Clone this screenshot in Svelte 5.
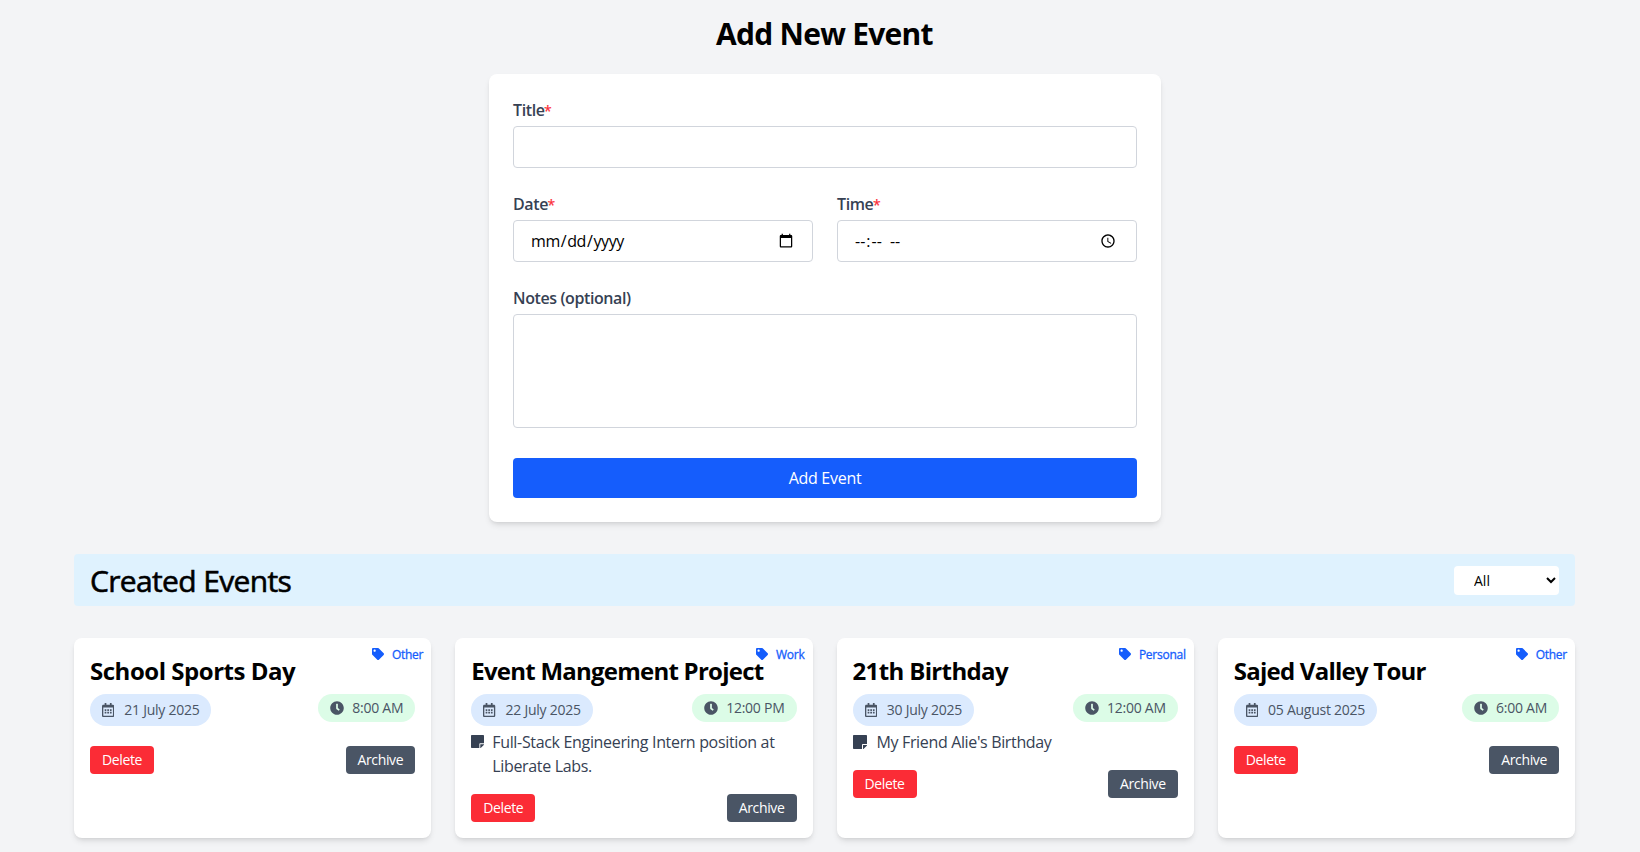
<script>
  const events = [
    { title: 'School Sports Day', date: '21 July 2025', time: '8:00 AM', tag: 'Other', note: '' },
    {
      title: 'Event Mangement Project',
      date: '22 July 2025',
      time: '12:00 PM',
      tag: 'Work',
      note: 'Full-Stack Engineering Intern position at Liberate Labs.',
    },
    { title: '21th Birthday', date: '30 July 2025', time: '12:00 AM', tag: 'Personal', note: "My Friend Alie's Birthday" },
    { title: 'Sajed Valley Tour', date: '05 August 2025', time: '6:00 AM', tag: 'Other', note: '' },
  ];
  const categories = ['All', 'Work', 'Personal', 'Other'];
  let filter = $state('All');
  const shown = $derived(filter === 'All' ? events : events.filter((e) => e.tag === filter));
</script>

<main>
  <h1>Add New Event</h1>

  <form class="panel" onsubmit={(e) => e.preventDefault()}>
    <div class="field">
      <label for="title">Title<span>*</span></label>
      <input id="title" type="text" />
    </div>
    <div class="pair">
      <div class="field">
        <label for="date">Date<span>*</span></label>
        <input id="date" type="date" />
      </div>
      <div class="field">
        <label for="time">Time<span>*</span></label>
        <input id="time" class="clock" type="time" />
      </div>
    </div>
    <div class="field">
      <label for="notes">Notes (optional)</label>
      <textarea id="notes"></textarea>
    </div>
    <button class="submit" type="submit">Add Event</button>
  </form>

  <section class="bar">
    <h2>Created Events</h2>
    <select bind:value={filter}>
      {#each categories as c}<option value={c}>{c}</option>{/each}
    </select>
  </section>

  <section class="grid">
    {#each shown as ev}
      <article class="card">
        <div class="tag">
          <svg width="12" height="12" viewBox="0 0 512 512"><path d="M0 252.118V48C0 21.49 21.49 0 48 0h204.118a48 48 0 0 1 33.941 14.059l211.882 211.882c18.745 18.745 18.745 49.137 0 67.882L293.823 497.941c-18.745 18.745-49.137 18.745-67.882 0L14.059 286.059A48 48 0 0 1 0 252.118zM112 64c-26.51 0-48 21.49-48 48s21.49 48 48 48 48-21.49 48-48-21.49-48-48-48z" /></svg>
          <span>{ev.tag}</span>
        </div>
        <h3 class:tight={ev.title.length > 20 || ev.title.startsWith('Sajed')} class:loose={ev.title.startsWith('School')}>{ev.title}</h3>
        <div class="when">
          <p class="pill date">
            <svg width="12.25" height="14" viewBox="0 0 448 512"><path d="M148 288h-40c-6.6 0-12-5.4-12-12v-40c0-6.6 5.4-12 12-12h40c6.6 0 12 5.4 12 12v40c0 6.6-5.4 12-12 12zm108-12v-40c0-6.6-5.4-12-12-12h-40c-6.6 0-12 5.4-12 12v40c0 6.6 5.4 12 12 12h40c6.6 0 12-5.4 12-12zm96 0v-40c0-6.6-5.4-12-12-12h-40c-6.6 0-12 5.4-12 12v40c0 6.6 5.4 12 12 12h40c6.6 0 12-5.4 12-12zm-96 96v-40c0-6.6-5.4-12-12-12h-40c-6.6 0-12 5.4-12 12v40c0 6.6 5.4 12 12 12h40c6.6 0 12-5.4 12-12zm-96 0v-40c0-6.6-5.4-12-12-12h-40c-6.6 0-12 5.4-12 12v40c0 6.6 5.4 12 12 12h40c6.6 0 12-5.4 12-12zm192 0v-40c0-6.6-5.4-12-12-12h-40c-6.6 0-12 5.4-12 12v40c0 6.6 5.4 12 12 12h40c6.6 0 12-5.4 12-12zm96-260v352c0 26.5-21.5 48-48 48H48c-26.5 0-48-21.5-48-48V112c0-26.5 21.5-48 48-48h48V12c0-6.6 5.4-12 12-12h40c6.6 0 12 5.4 12 12v52h128V12c0-6.6 5.4-12 12-12h40c6.6 0 12 5.4 12 12v52h48c26.5 0 48 21.5 48 48zm-48 346V160H48v298c0 3.3 2.7 6 6 6h340c3.3 0 6-2.7 6-6z" /></svg>
            <span>{ev.date}</span>
          </p>
          <p class="pill time">
            <svg width="14" height="14" viewBox="0 0 512 512"><path d="M256,8C119,8,8,119,8,256S119,504,256,504,504,393,504,256,393,8,256,8Zm92.49,313h0l-20,25a16,16,0,0,1-22.49,2.5h0l-67-49.72a40,40,0,0,1-15-31.23V112a16,16,0,0,1,16-16h32a16,16,0,0,1,16,16V256l58,42.5A16,16,0,0,1,348.49,321Z" /></svg>
            <span>{ev.time}</span>
          </p>
        </div>
        {#if ev.note}
          <div class="note" class:long={ev.note.length > 40}>
            <svg width="14" height="16" viewBox="0 0 448 512"><path d="M312 320h136V56c0-13.3-10.7-24-24-24H24C10.7 32 0 42.7 0 56v400c0 13.3 10.7 24 24 24h264V344c0-13.2 10.8-24 24-24zm129 55l-98 98c-4.5 4.5-10.6 7-17 7h-6V352h128v6.1c0 6.3-2.5 12.4-7 16.9z" /></svg>
            <p>{ev.note}</p>
          </div>
        {/if}
        <div class="actions">
          <button class="delete">Delete</button>
          <button class="archive">Archive</button>
        </div>
      </article>
    {/each}
  </section>
</main>

<style>
  :global(body) {
    background: #f3f4f6;
    overflow: hidden;
  }
  :global(*) {
    box-sizing: border-box;
  }
  main {
    width: 1501px;
    height: 852px;
    margin-left: 74px;
    padding-top: 16px;
    color: #000;
    font: 16px/24px 'Segoe UI', 'Open Sans', 'Noto Sans', sans-serif;
  }
  h1, h2, h3, p {
    margin: 0;
  }
  h1 {
    margin-bottom: 22px;
    font-size: 30px;
    line-height: 36px;
    font-weight: 700;
    letter-spacing: -0.74px;
    text-align: center;
  }
  .panel {
    display: flex;
    flex-direction: column;
    gap: 24px;
    width: 672px;
    height: 448px;
    margin: 0 auto 32px 415px;
    padding: 24px;
    border-radius: 8px;
    background: #fff;
    box-shadow: 0 4px 6px -1px rgb(0 0 0 / 0.1), 0 2px 4px -2px rgb(0 0 0 / 0.1);
  }
  .field {
    display: flex;
    flex-direction: column;
    gap: 4px;
  }
  .pair {
    display: grid;
    grid-template-columns: 1fr 1fr;
    gap: 24px;
  }
  label {
    color: #364153;
    font-weight: 600;
    letter-spacing: -0.4px;
    height: 24px;
  }
  label span {
    color: #fb2c36;
    font-size: 14px;
    font-weight: 400;
    letter-spacing: 0;
    margin-left: -0.5px;
    -webkit-text-stroke: 0.2px currentColor;
  }
  input, textarea {
    width: 100%;
    height: 42px;
    padding: 8px 16px;
    border: 1px solid #d1d5dc;
    border-radius: 4px;
    background: #fff;
    color: #000;
    font: inherit;
    letter-spacing: -0.42px;
    outline: none;
  }
  .clock::-webkit-datetime-edit-hour-field,
  .clock::-webkit-datetime-edit-minute-field,
  .clock::-webkit-datetime-edit-ampm-field {
    width: auto;
    letter-spacing: 0.8px;
  }
  .clock::-webkit-datetime-edit-ampm-field {
    margin-left: 4px;
  }
  textarea {
    height: 114px;
    margin-bottom: 6px;
    resize: none;
  }
  button {
    border: 0;
    border-radius: 4px;
    color: #fff;
    font: inherit;
  }
  .submit {
    height: 40px;
    background: #155dfc;
    letter-spacing: -0.28px;
  }
  .bar {
    display: flex;
    align-items: center;
    justify-content: space-between;
    height: 52px;
    margin-bottom: 32px;
    padding: 0 16px;
    border-radius: 4px;
    background: #dff2fe;
  }
  h2 {
    padding-top: 2px;
    font-size: 30px;
    line-height: 36px;
    font-weight: 500;
    letter-spacing: -0.65px;
    -webkit-text-stroke: 0.6px currentColor;
  }
  select {
    width: 105px;
    height: 29px;
    padding: 0 0 0 16px;
    border: 0;
    border-radius: 4px;
    background-color: #fff;
    color: #000;
    font: inherit;
    font-size: 14px;
  }
  .grid {
    display: grid;
    grid-template-columns: repeat(4, 1fr);
    gap: 24px;
  }
  .card {
    position: relative;
    display: flex;
    flex-direction: column;
    min-width: 0;
    min-height: 200px;
    padding: 16px;
    border-radius: 8px;
    background: #fff;
    box-shadow: 0 4px 6px -1px rgb(0 0 0 / 0.1), 0 2px 4px -2px rgb(0 0 0 / 0.1);
  }
  svg {
    flex: none;
    display: block;
    fill: currentColor;
  }
  .tag {
    position: absolute;
    top: 9px;
    right: 8px;
    display: flex;
    gap: 8px;
    color: #155dfc;
    font-size: 12px;
    line-height: 16px;
    font-weight: 500;
    letter-spacing: -0.25px;
    -webkit-text-stroke: 0.3px currentColor;
  }
  .tag svg {
    margin-top: 1px;
  }
  h3 {
    padding-top: 1px;
    height: 32px;
    font-size: 24px;
    line-height: 32px;
    font-weight: 700;
    letter-spacing: -0.64px;
    white-space: nowrap;
  }
  h3.tight {
    letter-spacing: -0.76px;
  }
  h3.loose {
    letter-spacing: -0.47px;
  }
  .when {
    display: flex;
    align-items: flex-start;
    justify-content: space-between;
    margin: 8px 0 4px;
  }
  .pill {
    display: flex;
    align-items: center;
    gap: 8px;
    padding: 4px 12px;
    border-radius: 999px;
    color: #4a5565;
    font-size: 14px;
    line-height: 20px;
    letter-spacing: -0.25px;
  }
  .date {
    gap: 10px;
    padding-block: 6px;
    background: #dbeafe;
  }
  .time {
    background: #dcfce7;
  }
  .note {
    display: flex;
    gap: 10px;
    color: #364153;
    letter-spacing: -0.35px;
  }
  .note svg {
    margin-top: 4px;
  }
  .note.long {
    gap: 8px;
    letter-spacing: -0.33px;
  }
  .note.long svg {
    width: 13px;
    height: 15px;
  }
  .actions {
    display: flex;
    justify-content: space-between;
    margin-top: 16px;
  }
  .actions button {
    height: 28px;
    padding: 0 12px;
    font-size: 14px;
    line-height: 20px;
    letter-spacing: -0.36px;
  }
  .delete {
    background: #fb2c36;
  }
  .archive {
    background: #4a5565;
  }
</style>
